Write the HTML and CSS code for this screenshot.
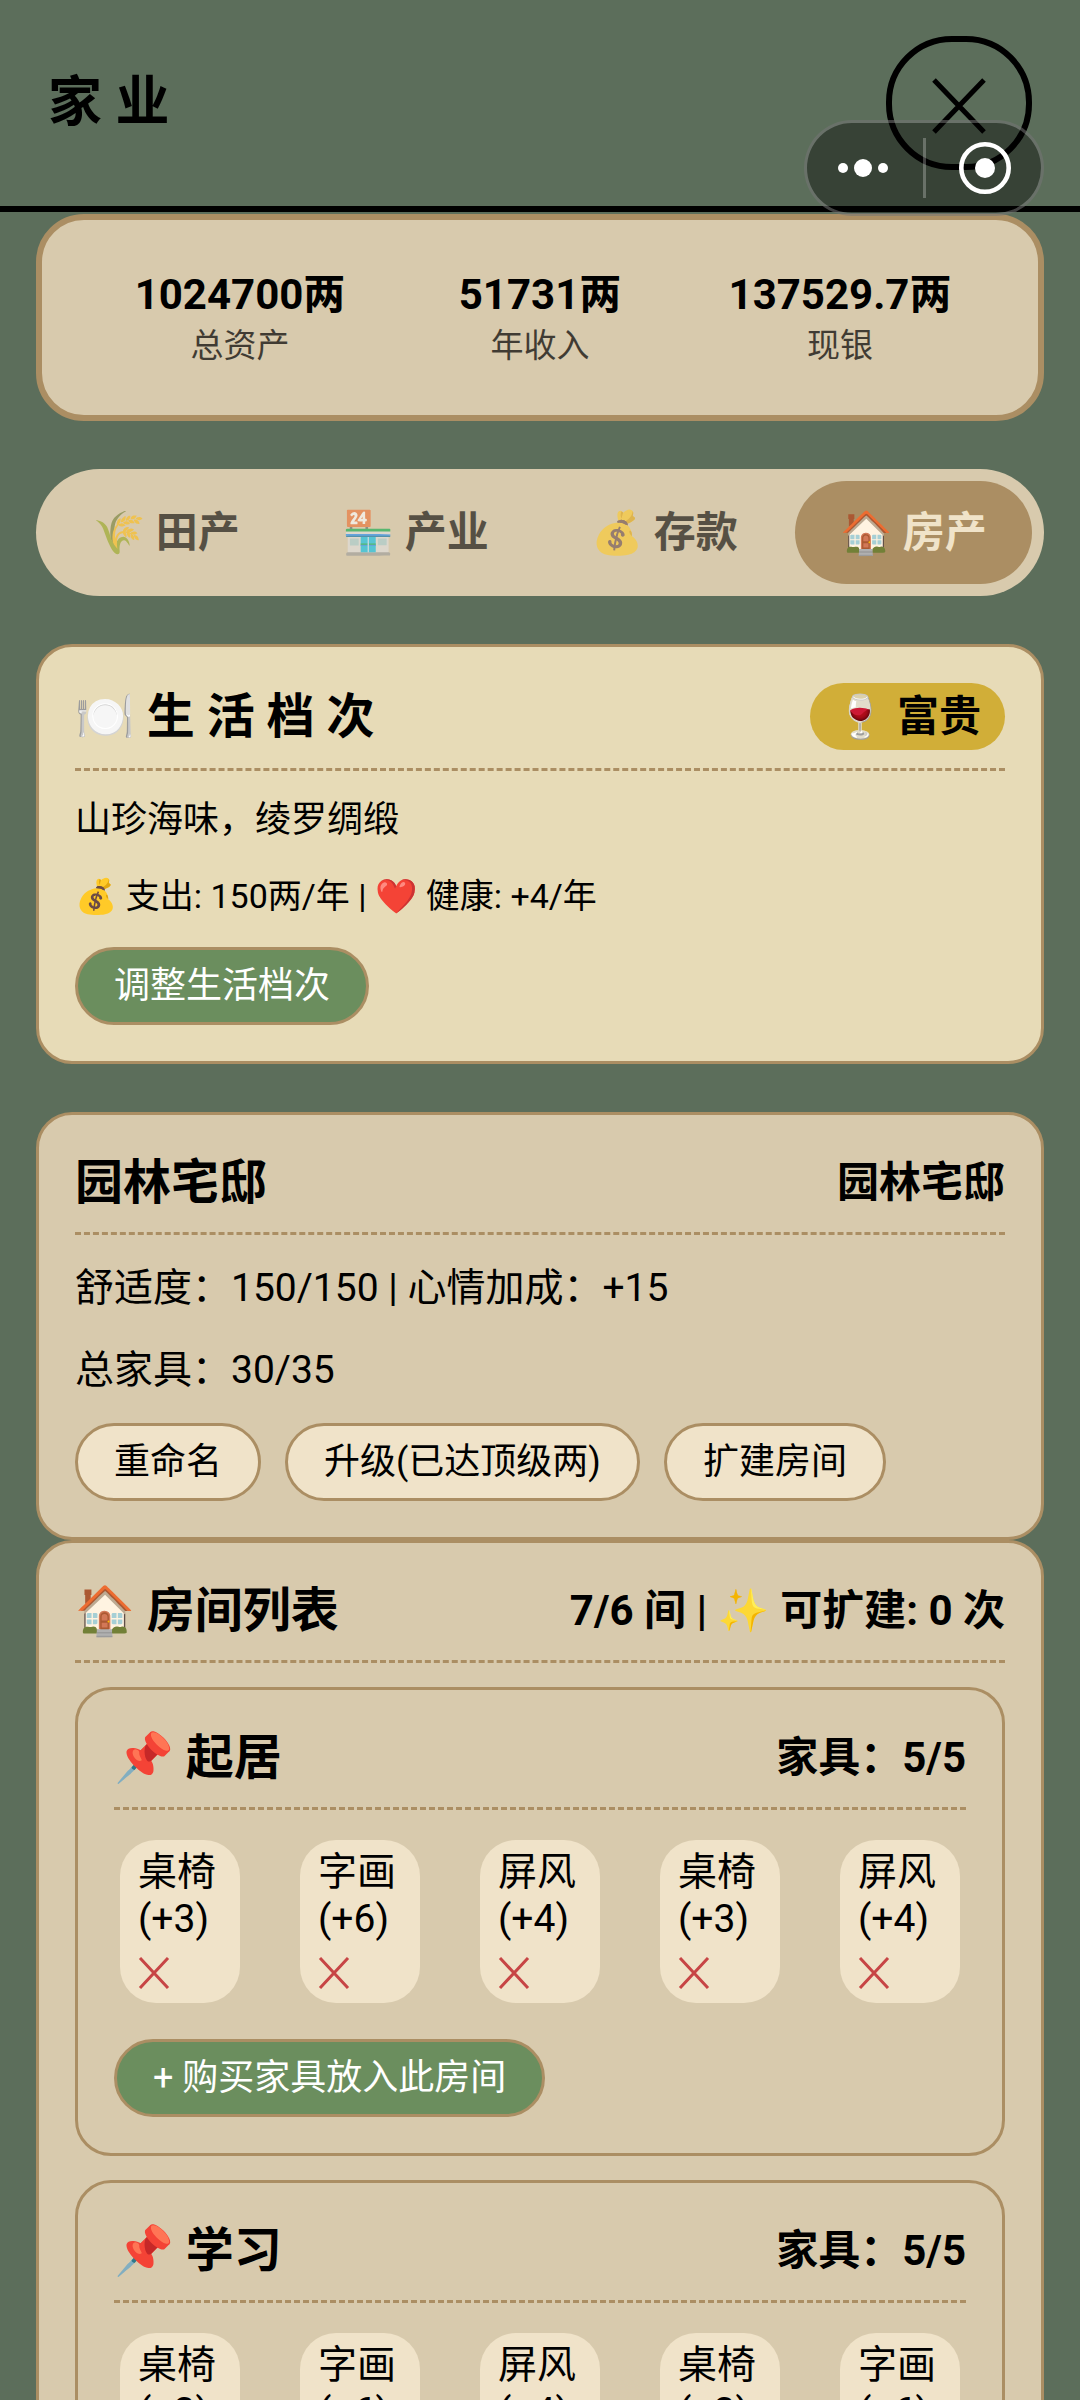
FILE: index.html
```html
<!DOCTYPE html>
<html lang="zh-CN">
<head>
    <meta charset="UTF-8">
    <meta name="viewport" content="width=device-width, initial-scale=1.0">
    <title>家业</title>
    <link rel="stylesheet" href="styles.css">
</head>
<body>
    <header class="header">
        <h1>家 业</h1>
        <button class="close-btn" aria-label="关闭">
            <svg width="56" height="58" viewBox="0 0 56 58"><path d="M3 3 L53 55 M53 3 L3 55" stroke="#000" stroke-width="5"/></svg>
        </button>
        <!-- mini program capsule -->
        <div class="capsule">
            <button class="more" aria-label="更多">
                <svg width="52" height="20" viewBox="0 0 52 20" fill="#fff"><circle cx="6" cy="10" r="5"/><circle cx="26" cy="10" r="9"/><circle cx="46" cy="10" r="5"/></svg>
            </button>
            <span class="divider"></span>
            <button class="exit" aria-label="退出">
                <svg width="52" height="52" viewBox="0 0 52 52"><circle cx="26" cy="26" r="23.7" fill="none" stroke="#fff" stroke-width="4.6"/><circle cx="26" cy="26" r="10" fill="#fff"/></svg>
            </button>
        </div>
    </header>

    <main class="container">
        <section class="stats">
            <div class="stat">
                <strong>1024700两</strong>
                <span>总资产</span>
            </div>
            <div class="stat">
                <strong>51731两</strong>
                <span>年收入</span>
            </div>
            <div class="stat">
                <strong>137529.7两</strong>
                <span>现银</span>
            </div>
        </section>

        <nav class="tabs">
            <button class="tab">🌾 田产</button>
            <button class="tab">🏪 产业</button>
            <button class="tab">💰 存款</button>
            <button class="tab active">🏠 房产</button>
        </nav>

        <section class="card life">
            <div class="card-header">
                <h2>🍽️ 生 活 档 次</h2>
                <span class="badge">🍷 富贵</span>
            </div>
            <p class="desc">山珍海味，绫罗绸缎</p>
            <p class="cost">💰 支出: 150两/年 | ❤️ 健康: +4/年</p>
            <div class="actions">
                <button class="btn green">调整生活档次</button>
            </div>
        </section>

        <section class="card">
            <div class="card-header">
                <h2>园林宅邸</h2>
                <span>园林宅邸</span>
            </div>
            <p>舒适度：150/150 | 心情加成：+15</p>
            <p>总家具：30/35</p>
            <div class="actions">
                <button class="btn">重命名</button>
                <button class="btn">升级(已达顶级两)</button>
                <button class="btn">扩建房间</button>
            </div>
        </section>

        <section class="card">
            <div class="card-header">
                <h2>🏠 房间列表</h2>
                <span>7/6 间 | ✨ 可扩建: 0 次</span>
            </div>
            <div class="rooms" id="rooms"></div>
        </section>
    </main>

    <script>
        const rooms = [
            { name: '起居', items: [['桌椅', 3], ['字画', 6], ['屏风', 4], ['桌椅', 3], ['屏风', 4]] },
            { name: '学习', items: [['桌椅', 3], ['字画', 6], ['屏风', 4], ['桌椅', 3], ['字画', 6]] }
        ];

        function renderRooms() {
            document.getElementById('rooms').innerHTML = rooms.map(room => `
                <div class="room">
                    <div class="card-header">
                        <h2>📌 ${room.name}</h2>
                        <span>家具：${room.items.length}/5</span>
                    </div>
                    <div class="items">
                        ${room.items.map(([name, value]) => `
                            <div class="item">
                                <span>${name}<br>(+${value})</span>
                                <button class="remove" aria-label="移除${name}">
                                    <svg width="32" height="32" viewBox="0 0 32 32"><path d="M2 1 L30 31 M30 1 L2 31" stroke="#c74545" stroke-width="3"/></svg>
                                </button>
                            </div>
                        `).join('')}
                    </div>
                    <div class="actions">
                        <button class="btn green">+ 购买家具放入此房间</button>
                    </div>
                </div>
            `).join('');
        }

        renderRooms();
    </script>
</body>
</html>
```
FILE: styles.css
```css
* {
    box-sizing: border-box;
}

body {
    margin: 0;
    height: 100vh;
    overflow: hidden;
    background-color: #5c6e5b;
    color: #000;
    font-family: Roboto, "Noto Sans CJK SC", "Noto Color Emoji", sans-serif;
    font-size: 39px;
}

button {
    margin: 0;
    padding: 0;
    border: none;
    background: none;
    color: inherit;
    font: inherit;
    cursor: pointer;
}

svg {
    display: block;
}

h1, h2, p {
    margin: 0;
}

.header {
    position: relative;
    display: flex;
    justify-content: space-between;
    align-items: center;
    padding: 36px 48px;
    border-bottom: 6px solid #000;
}

.header h1 {
    font-size: 54px;
    line-height: 64px;
}

.close-btn {
    display: flex;
    justify-content: center;
    align-items: center;
    width: 146px;
    height: 134px;
    padding-top: 6px;
    border: 6px solid #000;
    border-radius: 66px;
}

.capsule {
    position: absolute;
    top: 120px;
    right: 36px;
    z-index: 2;
    display: flex;
    align-items: center;
    width: 240px;
    height: 96px;
    border: 3px solid rgba(255, 255, 255, 0.25);
    border-radius: 48px;
    background-color: rgba(0, 0, 0, 0.4);
}

.capsule button {
    flex: 1;
    display: flex;
    justify-content: center;
}

.capsule .more {
    padding-right: 4px;
}

.capsule .exit {
    padding-left: 4px;
}

.capsule .divider {
    width: 3px;
    height: 60px;
    background-color: rgba(255, 255, 255, 0.25);
}

.container {
    padding: 2px 36px 36px;
}

.stats {
    display: flex;
    padding: 48px;
    border: 6px solid #ab8e63;
    border-radius: 48px;
    background-color: #d8caad;
}

.stat {
    flex: 1;
    display: flex;
    flex-direction: column;
    text-align: center;
}

.stat strong {
    font-size: 42px;
    line-height: 54px;
}

.stat span {
    padding-top: 3px;
    font-size: 33px;
    line-height: 42px;
    opacity: 0.7;
}

.tabs {
    display: flex;
    gap: 12px;
    margin: 48px 0;
    padding: 12px;
    border-radius: 64px;
    background-color: #d8caad;
}

.tab {
    flex: 1;
    padding: 20px 0;
    border-radius: 52px;
    font-size: 42px;
    font-weight: bold;
    line-height: 63px;
    white-space: nowrap;
    opacity: 0.6;
}

.tab.active {
    background-color: #ab8e63;
    color: #f0e3c9;
    opacity: 1;
}

.card {
    padding: 36px;
    border: 3px solid #ab8e63;
    border-radius: 36px;
    background-color: #d8caad;
}

.card.life {
    margin-bottom: 48px;
    background-color: #e7dbb7;
}

.card-header {
    display: flex;
    justify-content: space-between;
    align-items: center;
    margin-bottom: 24px;
    padding-bottom: 18px;
    border-bottom: 3px dashed #ab8e63;
}

.card-header h2 {
    font-size: 48px;
    line-height: 63px;
}

.card-header span {
    font-size: 42px;
    font-weight: bold;
    line-height: 63px;
}

.card-header .badge {
    padding: 2px 24px;
    border-radius: 34px;
    background-color: #d1ae38;
}

.card p {
    margin-bottom: 24px;
    line-height: 58px;
}

.card .desc {
    font-size: 36px;
    line-height: 50px;
}

.card .cost {
    font-size: 34px;
    line-height: 54px;
}

.actions {
    display: flex;
    flex-wrap: wrap;
    gap: 24px;
}

.btn {
    padding: 9px 36px;
    border: 3px solid #ab8e63;
    border-radius: 39px;
    background-color: #f0e3c9;
    font-size: 36px;
    line-height: 54px;
}

.btn.green {
    background-color: #6b8e5e;
    color: #fff;
}

.rooms {
    display: flex;
    flex-direction: column;
    gap: 24px;
}

.room {
    padding: 36px;
    border: 3px solid #ab8e63;
    border-radius: 36px;
}

.items {
    display: flex;
    justify-content: space-between;
    margin-bottom: 36px;
    padding: 6px 6px 0;
}

.item {
    width: 120px;
    padding: 9px 18px 0;
    border-radius: 36px;
    background-color: #f0e3c9;
    line-height: 47px;
}

.remove {
    display: flex;
    align-items: center;
    height: 60px;
}
```
